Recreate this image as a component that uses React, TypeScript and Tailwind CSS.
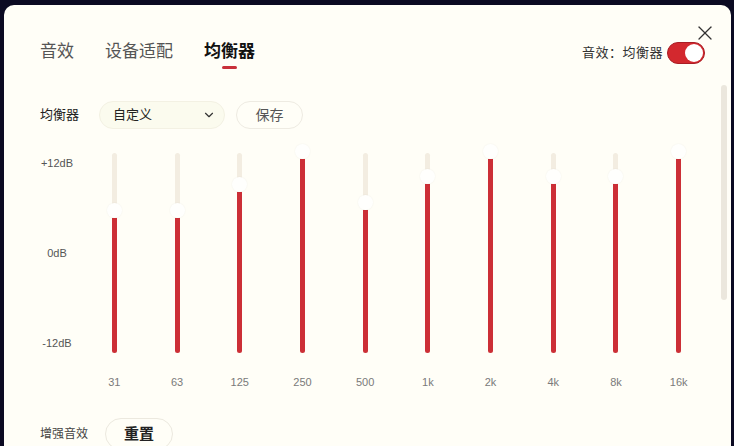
import React from "react";
import { X, ChevronDown } from "lucide-react";

const font = { fontFamily: '"Liberation Sans", "Noto Sans CJK SC", sans-serif' };

const bands = [
  { f: "31", top: 218 },
  { f: "63", top: 218 },
  { f: "125", top: 192 },
  { f: "250", top: 159 },
  { f: "500", top: 210 },
  { f: "1k", top: 184 },
  { f: "2k", top: 159 },
  { f: "4k", top: 184 },
  { f: "8k", top: 184 },
  { f: "16k", top: 159 },
];

function Slider({ f, top }: { f: string; top: number }) {
  const fill = 353 - top;
  const thumbTop = top - 168;
  return (
    <div className="flex flex-col items-center">
      <div className="relative w-[5px] h-[200px] rounded-full bg-[#f3ede1]">
        <div
          className="absolute bottom-0 left-0 w-[5px] rounded-b-full bg-[#cc2f36]"
          style={{ height: fill }}
        />
        <div
          className="absolute left-[-5px] w-[15px] h-[15px] rounded-full bg-[#fffffd] shadow-[0_0_2px_rgba(0,0,0,0.06)]"
          style={{ top: thumbTop }}
        />
      </div>
      <div className="mt-[21px] h-[16px] leading-[16px] text-[11px] text-[#7a7a7a]">{f}</div>
    </div>
  );
}

export default function App() {
  return (
    <div className="w-[734px] h-[446px] overflow-hidden bg-[#0b0a22] pt-[5px] pl-[4px] pr-[3px]" style={font}>
      <div className="relative h-[460px] rounded-[10px] bg-[#fffef7] px-[36px]">
        <button className="absolute left-[689px] top-[16px] text-[#333]">
          <X size={24} strokeWidth={1.3} />
        </button>
        <div className="absolute left-[717px] top-[80px] w-[6px] h-[215px] rounded-full bg-[#ebe7dd]" />

        {/* header */}
        <div className="flex items-start justify-between pt-[35px] h-[64px]">
          <div className="flex gap-[31px] text-[17px] leading-[24px]">
            <span className="text-[#555]">音效</span>
            <span className="text-[#555]">设备适配</span>
            <div className="flex flex-col items-center">
              <span className="font-bold text-[#111]">均衡器</span>
              <div className="mt-[2px] w-[15px] h-[3px] rounded-full bg-[#c9303a]" />
            </div>
          </div>
          <div className="flex items-center mt-[2px] mr-[-10px]">
            <span className="text-[13px] tracking-[0.5px] text-[#333] mr-[4px]">音效：均衡器</span>
            <div className="w-[38px] h-[22px] rounded-full bg-[#d3282e] border border-[#a91d24] flex items-center justify-end pr-[1px]">
              <div className="w-[18px] h-[18px] rounded-full bg-white" />
            </div>
          </div>
        </div>

        {/* preset row */}
        <div className="flex items-center mt-[32px] h-[28px]">
          <span className="text-[13px] text-[#222] w-[59px]">均衡器</span>
          <div className="flex items-center justify-between w-[126px] h-[28px] rounded-full bg-[#fbfbee] border border-[#f3f1e3] pl-[13px] pr-[8px]">
            <span className="text-[13px] text-[#222]">自定义</span>
            <ChevronDown size={14} strokeWidth={2} className="text-[#333]" />
          </div>
          <button className="ml-[11px] w-[67px] h-[28px] rounded-full border border-[#eeebe2] text-[14px] text-[#555]">
            保存
          </button>
        </div>

        {/* eq */}
        <div className="flex mt-[24px]">
          <div className="w-[34px] shrink-0 flex flex-col items-center gap-[74px] pt-[2px] text-[11px] leading-[16px] text-[#555]">
            <span>+12dB</span>
            <span>0dB</span>
            <span>-12dB</span>
          </div>
          <div className="ml-[9px] w-[627px] shrink-0 grid grid-cols-10">
            {bands.map((b) => (
              <Slider key={b.f} f={b.f} top={b.top} />
            ))}
          </div>
        </div>

        {/* bottom */}
        <div className="flex items-center mt-[28px]">
          <span className="text-[12px] text-[#444] w-[65px]">增强音效</span>
          <button className="w-[68px] h-[32px] rounded-full border border-[#ece9df] text-[15px] font-semibold text-[#222]">
            重置
          </button>
        </div>
      </div>
    </div>
  );
}
